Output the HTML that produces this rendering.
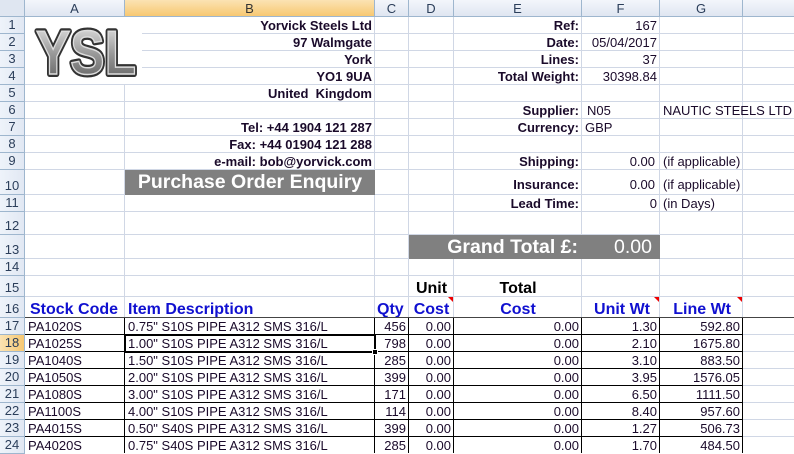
<!DOCTYPE html>
<html><head><meta charset="utf-8"><style>
*{margin:0;padding:0;box-sizing:border-box}
body{width:794px;height:453px;overflow:hidden;background:#fff;font-family:"Liberation Sans",Arial,sans-serif;position:relative}
.h{position:absolute;left:0;width:794px;height:1px;background:#d0d7e5}
.v{position:absolute;top:17px;width:1px;height:436px;background:#d0d7e5}
.c{position:absolute;display:flex;align-items:flex-end;padding:0 3px 1px 3px;font-size:13px;color:#1a0a2a;white-space:nowrap;line-height:15px}
.r{justify-content:flex-end}.m{justify-content:center}
.b{font-weight:bold}
.blue{color:#1010d0;font-weight:bold;font-size:16px}
.ch{position:absolute;top:0;height:17px;background:linear-gradient(#f3f6fb,#dfe6f1);border-right:1px solid #9eb6ce;border-bottom:1px solid #9eb6ce;font-size:13px;color:#2b3e5a;text-align:center;line-height:17px}
.rh{position:absolute;left:0;width:25px;background:linear-gradient(90deg,#eef3fa,#e1e8f3);border-bottom:1px solid #9eb6ce;border-right:1px solid #9eb6ce;font-size:13px;color:#2b3e5a;display:flex;align-items:flex-end;justify-content:center;padding-bottom:1px}
.bh{position:absolute;height:1px;background:#000;left:25px;width:718px}
.bv{position:absolute;top:318px;height:135px;width:1px;background:#000}
.tri{position:absolute;width:0;height:0;border-top:5px solid #e00;border-left:5px solid transparent}
</style></head><body>
<div class="h" style="top:33px"></div><div class="h" style="top:50px"></div><div class="h" style="top:67px"></div><div class="h" style="top:84px"></div><div class="h" style="top:101px"></div><div class="h" style="top:118px"></div><div class="h" style="top:135px"></div><div class="h" style="top:152px"></div><div class="h" style="top:169px"></div><div class="h" style="top:194px"></div><div class="h" style="top:211px"></div><div class="h" style="top:234px"></div><div class="h" style="top:258px"></div><div class="h" style="top:275px"></div><div class="h" style="top:296px"></div>
<div class="h" style="top:334px"></div><div class="h" style="top:351px"></div><div class="h" style="top:368px"></div><div class="h" style="top:385px"></div><div class="h" style="top:402px"></div><div class="h" style="top:419px"></div><div class="h" style="top:436px"></div>
<div class="v" style="left:124px"></div><div class="v" style="left:374px"></div><div class="v" style="left:408px"></div><div class="v" style="left:453px"></div><div class="v" style="left:581px"></div><div class="v" style="left:659px"></div><div class="v" style="left:742px"></div>
<div style="position:absolute;left:25px;top:17px;width:117px;height:67px;background:#fff"></div>
<svg style="position:absolute;left:33px;top:23px" width="108" height="58" viewBox="0 0 108 58">
<defs><linearGradient id="g" x1="0" y1="0" x2="0" y2="1"><stop offset="0" stop-color="#eee"/><stop offset="0.5" stop-color="#999"/><stop offset="1" stop-color="#555"/></linearGradient></defs>
<text x="3" y="51" font-family="Liberation Sans" font-weight="bold" font-size="62" textLength="100" lengthAdjust="spacingAndGlyphs" fill="#333" stroke="#333" stroke-width="6" stroke-linejoin="round">YSL</text>
<text x="3" y="51" font-family="Liberation Sans" font-weight="bold" font-size="62" textLength="100" lengthAdjust="spacingAndGlyphs" fill="url(#g)" stroke="#ddd" stroke-width="1.5">YSL</text>
</svg>
<div class="ch" style="left:0;width:25px;background:#dfe6f1"></div>
<div class="ch" style="left:25px;width:100px">A</div>
<div class="ch" style="left:125px;width:250px;background:linear-gradient(#fbe3b3,#f7c872);color:#333">B</div>
<div class="ch" style="left:375px;width:34px">C</div>
<div class="ch" style="left:409px;width:45px">D</div>
<div class="ch" style="left:454px;width:128px">E</div>
<div class="ch" style="left:582px;width:78px">F</div>
<div class="ch" style="left:660px;width:83px">G</div>
<div class="ch" style="left:743px;width:51px;border-right:none"></div>
<div class="rh" style="top:17px;height:17px">1</div><div class="rh" style="top:34px;height:17px">2</div><div class="rh" style="top:51px;height:17px">3</div><div class="rh" style="top:68px;height:17px">4</div><div class="rh" style="top:85px;height:17px">5</div><div class="rh" style="top:102px;height:17px">6</div><div class="rh" style="top:119px;height:17px">7</div><div class="rh" style="top:136px;height:17px">8</div><div class="rh" style="top:153px;height:17px">9</div><div class="rh" style="top:170px;height:25px">10</div><div class="rh" style="top:195px;height:17px">11</div><div class="rh" style="top:212px;height:23px">12</div><div class="rh" style="top:235px;height:24px">13</div><div class="rh" style="top:259px;height:17px">14</div><div class="rh" style="top:276px;height:21px">15</div><div class="rh" style="top:297px;height:21px">16</div><div class="rh" style="top:318px;height:17px">17</div><div class="rh" style="top:335px;height:17px;background:linear-gradient(90deg,#fbe3b3,#f7c872)">18</div><div class="rh" style="top:352px;height:17px">19</div><div class="rh" style="top:369px;height:17px">20</div><div class="rh" style="top:386px;height:17px">21</div><div class="rh" style="top:403px;height:17px">22</div><div class="rh" style="top:420px;height:17px">23</div><div class="rh" style="top:437px;height:17px">24</div>
<div class="c r b" style="left:125px;top:17px;width:250px;height:17px">Yorvick Steels Ltd</div>
<div class="c r b" style="left:125px;top:34px;width:250px;height:17px">97 Walmgate</div>
<div class="c r b" style="left:125px;top:51px;width:250px;height:17px">York</div>
<div class="c r b" style="left:125px;top:68px;width:250px;height:17px">YO1 9UA</div>
<div class="c r b" style="left:125px;top:85px;width:250px;height:17px">United&nbsp; Kingdom</div>
<div class="c r b" style="left:125px;top:119px;width:250px;height:17px">Tel: +44 1904 121 287</div>
<div class="c r b" style="left:125px;top:136px;width:250px;height:17px">Fax: +44 01904 121 288</div>
<div class="c r b" style="left:125px;top:153px;width:250px;height:17px">e-mail: bob@yorvick.com</div>
<div class="c m b" style="left:125px;top:170px;width:250px;height:25px;background:#808080;color:#fff;font-size:19.5px;line-height:22px;padding-bottom:2px">Purchase Order Enquiry</div>
<div class="c r b" style="left:454px;top:17px;width:128px;height:17px">Ref:</div><div class="c r" style="left:582px;top:17px;width:78px;height:17px">167</div>
<div class="c r b" style="left:454px;top:34px;width:128px;height:17px">Date:</div><div class="c r" style="left:582px;top:34px;width:78px;height:17px">05/04/2017</div>
<div class="c r b" style="left:454px;top:51px;width:128px;height:17px">Lines:</div><div class="c r" style="left:582px;top:51px;width:78px;height:17px">37</div>
<div class="c r b" style="left:409px;top:68px;width:173px;height:17px">Total Weight:</div><div class="c r" style="left:582px;top:68px;width:78px;height:17px">30398.84</div>
<div class="c r b" style="left:454px;top:102px;width:128px;height:17px">Supplier:</div><div class="c" style="left:584px;top:102px;width:76px;height:17px">N05</div><div class="c" style="left:660px;top:102px;width:134px;height:17px">NAUTIC STEELS LTD</div>
<div class="c r b" style="left:454px;top:119px;width:128px;height:17px">Currency:</div><div class="c" style="left:582px;top:119px;width:78px;height:17px">GBP</div>
<div class="c r b" style="left:454px;top:153px;width:128px;height:17px">Shipping:</div><div class="c r" style="left:582px;top:153px;width:78px;height:17px;padding-right:5px">0.00</div><div class="c" style="left:660px;top:153px;width:110px;height:17px">(if applicable)</div>
<div class="c r b" style="left:454px;top:170px;width:128px;height:25px;padding-bottom:3px">Insurance:</div><div class="c r" style="left:582px;top:170px;width:78px;height:25px;padding-right:5px;padding-bottom:3px">0.00</div><div class="c" style="left:660px;top:170px;width:110px;height:25px;padding-bottom:3px">(if applicable)</div>
<div class="c r b" style="left:454px;top:195px;width:128px;height:17px">Lead Time:</div><div class="c r" style="left:582px;top:195px;width:78px;height:17px">0</div><div class="c" style="left:660px;top:195px;width:110px;height:17px">(in Days)</div>
<div style="position:absolute;left:409px;top:235px;width:251px;height:24px;background:#808080"></div>
<div class="c r b" style="left:409px;top:235px;width:173px;height:24px;color:#fff;font-size:19.5px;line-height:22px;padding-right:4px">Grand Total £:</div>
<div class="c r" style="left:582px;top:235px;width:78px;height:24px;color:#fff;font-size:19.5px;line-height:22px;padding-right:8px">0.00</div>
<div class="c m b" style="left:409px;top:276px;width:45px;height:21px;font-size:16px;color:#000">Unit</div>
<div class="c m b" style="left:454px;top:276px;width:128px;height:21px;font-size:16px;color:#000">Total</div>
<div class="c blue" style="left:27px;top:297px;width:98px;height:21px">Stock Code</div>
<div class="c blue" style="left:125px;top:297px;width:250px;height:21px">Item Description</div>
<div class="c blue" style="left:375px;top:297px;width:40px;height:21px;padding-left:2px">Qty</div>
<div class="c blue m" style="left:409px;top:297px;width:45px;height:21px">Cost</div>
<div class="c blue m" style="left:454px;top:297px;width:128px;height:21px">Cost</div>
<div class="c blue r" style="left:582px;top:297px;width:78px;height:21px;padding-right:10px">Unit Wt</div>
<div class="c blue r" style="left:660px;top:297px;width:83px;height:21px;padding-right:12px">Line Wt</div>
<div class="tri" style="left:448px;top:297px"></div><div class="tri" style="left:654px;top:297px"></div><div class="tri" style="left:737px;top:297px"></div>
<div class="bh" style="top:317px;width:769px;background:#444"></div>
<div class="bh" style="top:334px"></div><div class="bh" style="top:351px"></div><div class="bh" style="top:368px"></div><div class="bh" style="top:385px"></div><div class="bh" style="top:402px"></div><div class="bh" style="top:419px"></div><div class="bh" style="top:436px"></div>
<div class="bv" style="left:124px"></div><div class="bv" style="left:374px"></div><div class="bv" style="left:408px"></div><div class="bv" style="left:453px"></div><div class="bv" style="left:581px"></div><div class="bv" style="left:659px"></div><div class="bv" style="left:742px"></div>
<div class="c" style="left:25px;top:318px;width:100px;height:17px">PA1020S</div><div class="c" style="left:125px;top:318px;width:250px;height:17px">0.75" S10S PIPE A312 SMS 316/L</div><div class="c r" style="left:375px;top:318px;width:34px;height:17px">456</div><div class="c r" style="left:409px;top:318px;width:45px;height:17px">0.00</div><div class="c r" style="left:454px;top:318px;width:128px;height:17px">0.00</div><div class="c r" style="left:582px;top:318px;width:78px;height:17px">1.30</div><div class="c r" style="left:660px;top:318px;width:83px;height:17px">592.80</div>
<div class="c" style="left:25px;top:335px;width:100px;height:17px">PA1025S</div><div class="c" style="left:125px;top:335px;width:250px;height:17px">1.00" S10S PIPE A312 SMS 316/L</div><div class="c r" style="left:375px;top:335px;width:34px;height:17px">798</div><div class="c r" style="left:409px;top:335px;width:45px;height:17px">0.00</div><div class="c r" style="left:454px;top:335px;width:128px;height:17px">0.00</div><div class="c r" style="left:582px;top:335px;width:78px;height:17px">2.10</div><div class="c r" style="left:660px;top:335px;width:83px;height:17px">1675.80</div>
<div class="c" style="left:25px;top:352px;width:100px;height:17px">PA1040S</div><div class="c" style="left:125px;top:352px;width:250px;height:17px">1.50" S10S PIPE A312 SMS 316/L</div><div class="c r" style="left:375px;top:352px;width:34px;height:17px">285</div><div class="c r" style="left:409px;top:352px;width:45px;height:17px">0.00</div><div class="c r" style="left:454px;top:352px;width:128px;height:17px">0.00</div><div class="c r" style="left:582px;top:352px;width:78px;height:17px">3.10</div><div class="c r" style="left:660px;top:352px;width:83px;height:17px">883.50</div>
<div class="c" style="left:25px;top:369px;width:100px;height:17px">PA1050S</div><div class="c" style="left:125px;top:369px;width:250px;height:17px">2.00" S10S PIPE A312 SMS 316/L</div><div class="c r" style="left:375px;top:369px;width:34px;height:17px">399</div><div class="c r" style="left:409px;top:369px;width:45px;height:17px">0.00</div><div class="c r" style="left:454px;top:369px;width:128px;height:17px">0.00</div><div class="c r" style="left:582px;top:369px;width:78px;height:17px">3.95</div><div class="c r" style="left:660px;top:369px;width:83px;height:17px">1576.05</div>
<div class="c" style="left:25px;top:386px;width:100px;height:17px">PA1080S</div><div class="c" style="left:125px;top:386px;width:250px;height:17px">3.00" S10S PIPE A312 SMS 316/L</div><div class="c r" style="left:375px;top:386px;width:34px;height:17px">171</div><div class="c r" style="left:409px;top:386px;width:45px;height:17px">0.00</div><div class="c r" style="left:454px;top:386px;width:128px;height:17px">0.00</div><div class="c r" style="left:582px;top:386px;width:78px;height:17px">6.50</div><div class="c r" style="left:660px;top:386px;width:83px;height:17px">1111.50</div>
<div class="c" style="left:25px;top:403px;width:100px;height:17px">PA1100S</div><div class="c" style="left:125px;top:403px;width:250px;height:17px">4.00" S10S PIPE A312 SMS 316/L</div><div class="c r" style="left:375px;top:403px;width:34px;height:17px">114</div><div class="c r" style="left:409px;top:403px;width:45px;height:17px">0.00</div><div class="c r" style="left:454px;top:403px;width:128px;height:17px">0.00</div><div class="c r" style="left:582px;top:403px;width:78px;height:17px">8.40</div><div class="c r" style="left:660px;top:403px;width:83px;height:17px">957.60</div>
<div class="c" style="left:25px;top:420px;width:100px;height:17px">PA4015S</div><div class="c" style="left:125px;top:420px;width:250px;height:17px">0.50" S40S PIPE A312 SMS 316/L</div><div class="c r" style="left:375px;top:420px;width:34px;height:17px">399</div><div class="c r" style="left:409px;top:420px;width:45px;height:17px">0.00</div><div class="c r" style="left:454px;top:420px;width:128px;height:17px">0.00</div><div class="c r" style="left:582px;top:420px;width:78px;height:17px">1.27</div><div class="c r" style="left:660px;top:420px;width:83px;height:17px">506.73</div>
<div class="c" style="left:25px;top:437px;width:100px;height:17px">PA4020S</div><div class="c" style="left:125px;top:437px;width:250px;height:17px">0.75" S40S PIPE A312 SMS 316/L</div><div class="c r" style="left:375px;top:437px;width:34px;height:17px">285</div><div class="c r" style="left:409px;top:437px;width:45px;height:17px">0.00</div><div class="c r" style="left:454px;top:437px;width:128px;height:17px">0.00</div><div class="c r" style="left:582px;top:437px;width:78px;height:17px">1.70</div><div class="c r" style="left:660px;top:437px;width:83px;height:17px">484.50</div>
<div style="position:absolute;left:124px;top:334px;width:252px;height:19px;border:2px solid #000"></div>
<div style="position:absolute;left:372px;top:349px;width:6px;height:6px;background:#000;border:1px solid #fff"></div>
</body></html>
